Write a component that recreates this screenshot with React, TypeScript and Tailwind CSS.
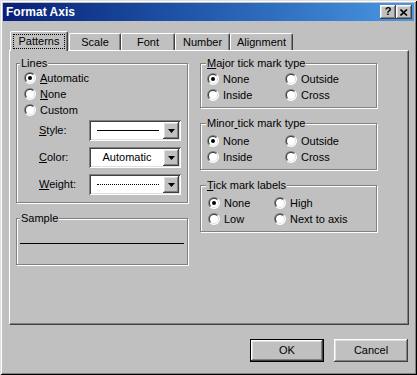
import React from "react";

const raised =
  "shadow-[inset_-1px_-1px_0_#404040,inset_1px_1px_0_#fff,inset_-2px_-2px_0_#808080,inset_2px_2px_0_#dfdfdf]";
const sunken =
  "shadow-[inset_1px_1px_0_#808080,inset_-1px_-1px_0_#fff,inset_2px_2px_0_#404040,inset_-2px_-2px_0_#dfdfdf]";

function Radio({ checked }: { checked?: boolean }) {
  return (
    <svg width="12" height="12" viewBox="0 0 12 12" className="shrink-0">
      <path d="M1.757 10.243A6 6 0 0 1 10.243 1.757Z" fill="#808080" />
      <path d="M10.243 1.757A6 6 0 0 1 1.757 10.243Z" fill="#ffffff" />
      <path d="M2.464 9.536A5 5 0 0 1 9.536 2.464Z" fill="#404040" />
      <path d="M9.536 2.464A5 5 0 0 1 2.464 9.536Z" fill="#dfdfdf" />
      <circle cx="6" cy="6" r="4" fill="#ffffff" />
      {checked && <circle cx="6" cy="6" r="2" fill="#000000" />}
    </svg>
  );
}

function Option({ label, checked }: { label: React.ReactNode; checked?: boolean }) {
  return (
    <div className="flex items-center gap-[4px] h-[16px]">
      <Radio checked={checked} />
      <span>{label}</span>
    </div>
  );
}

function GroupBox({
  label,
  className,
  labelClass,
  children,
}: {
  label: React.ReactNode;
  className: string;
  labelClass: string;
  children?: React.ReactNode;
}) {
  return (
    <div className={`relative border border-[#808080] shadow-[inset_1px_1px_0_#fff,1px_1px_0_#fff] ${className}`}>
      <span className={`absolute -top-[7px] bg-[#c0c0c0] px-[1px] leading-[13px] ${labelClass}`}>{label}</span>
      {children}
    </div>
  );
}

function Combo({ children }: { children: React.ReactNode }) {
  return (
    <div className={`flex w-[92px] h-[21px] bg-white p-[2px] ${sunken}`}>
      <div className="flex-1 flex items-center">{children}</div>
      <div className={`w-[16px] h-[17px] bg-[#c0c0c0] flex items-center justify-center ${raised}`}>
        <svg width="7" height="4" viewBox="0 0 7 4">
          <polygon points="0,0 7,0 3.5,4" fill="#000" />
        </svg>
      </div>
    </div>
  );
}

function TwoCol({
  rows,
  colWidth,
}: {
  rows: { label: React.ReactNode; checked?: boolean }[][];
  colWidth: string;
}) {
  return (
    <>
      {rows.map((row, i) => (
        <div key={i} className="flex">
          <div className={colWidth}>
            <Option label={row[0].label} checked={row[0].checked} />
          </div>
          <Option label={row[1].label} checked={row[1].checked} />
        </div>
      ))}
    </>
  );
}

export default function App() {
  return (
    <div className="w-[417px] h-[375px] bg-[#c0c0c0] p-[3px] text-[11px] text-black font-['Liberation_Sans',Arial,sans-serif] shadow-[inset_1px_1px_0_#dfdfdf,inset_-1px_-1px_0_#000,inset_2px_2px_0_#fff,inset_-2px_-2px_0_#808080]">
      {/* Title bar */}
      <div className="h-[18px] flex items-center justify-between pl-[3px] pr-[2px] bg-gradient-to-r from-[#0a1f78] to-[#4a98e4]">
        <span className="text-white font-bold text-[12px] leading-none">Format Axis</span>
        <div className="flex">
          <div className={`w-[16px] h-[14px] bg-[#c0c0c0] flex items-center justify-center font-bold text-[11px] leading-none pb-[1px] ${raised}`}>
            ?
          </div>
          <div className={`w-[16px] h-[14px] bg-[#c0c0c0] flex items-center justify-center ${raised}`}>
            <svg width="8" height="7" viewBox="0 0 8 7">
              <path d="M0.5 0.5L7 6.5M7 0.5L0.5 6.5" stroke="#000" strokeWidth="1.6" />
            </svg>
          </div>
        </div>
      </div>

      {/* Tabs */}
      <div className="flex items-end h-[19px] mt-[10px] ml-[7px]">
        <div className="relative z-10 -mb-px w-[58px] h-[20px] flex px-[2px] pt-[2px] pb-[2px] bg-[#c0c0c0] border-l border-t border-r border-white border-r-[#404040] rounded-t-[2px] shadow-[inset_-1px_0_0_#808080]">
          <span className="flex-1 flex items-center justify-center border border-dotted border-black">Patterns</span>
        </div>
        {[
          ["Scale", "w-[52px] ml-[1px]"],
          ["Font", "w-[54px]"],
          ["Number", "w-[55px]"],
          ["Alignment", "w-[63px]"],
        ].map(([t, w]) => (
          <div
            key={t}
            className={`${w} h-[17px] flex items-center justify-center border-l border-t border-r border-white border-r-[#404040] rounded-t-[2px] shadow-[inset_-1px_0_0_#808080]`}
          >
            {t}
          </div>
        ))}
      </div>

      {/* Tab panel */}
      <div className="ml-[6px] w-[400px] h-[275px] border border-white border-r-[#404040] border-b-[#404040] shadow-[inset_-1px_-1px_0_#808080] flex gap-[11px] pt-[12px] pl-[6px]">
        <div className="w-[173px] flex flex-col">
          <GroupBox label="Lines" className="w-[172px] h-[140px] pt-[6px] pl-[7px]" labelClass="left-[3px]">
            <Option label={<><u>A</u>utomatic</>} checked />
            <Option label={<><u>N</u>one</>} />
            <Option label="Custom" />
            <div className="flex flex-col gap-[6px] mt-[2px] ml-[15px]">
              <div className="flex items-center">
                <span className="w-[50px]"><u>S</u>tyle:</span>
                <Combo>
                  <div className="ml-[6px] w-[62px] h-px bg-black" />
                </Combo>
              </div>
              <div className="flex items-center">
                <span className="w-[50px]"><u>C</u>olor:</span>
                <Combo>
                  <span className="flex-1 text-center">Automatic</span>
                </Combo>
              </div>
              <div className="flex items-center">
                <span className="w-[50px]"><u>W</u>eight:</span>
                <Combo>
                  <div className="ml-[6px] w-[62px] border-t border-dotted border-black" />
                </Combo>
              </div>
            </div>
          </GroupBox>
          <GroupBox label="Sample" className="w-[172px] h-[47px] mt-[15px]" labelClass="left-[3px]">
            <div className="ml-[3px] mt-[24px] w-[164px] h-px bg-black" />
          </GroupBox>
        </div>

        <div className="w-[178px] flex flex-col">
          <GroupBox
            label={<><u>M</u>ajor tick mark type</>}
            className="w-[177px] h-[45px] pt-[7px] pl-[6px]"
            labelClass="left-[5px]"
          >
            <TwoCol
              colWidth="w-[78px]"
              rows={[
                [{ label: "None", checked: true }, { label: "Outside" }],
                [{ label: "Inside" }, { label: "Cross" }],
              ]}
            />
          </GroupBox>
          <GroupBox
            label={<>Minor<u> </u>tick mark type</>}
            className="w-[177px] h-[47px] mt-[15px] pt-[9px] pl-[6px]"
            labelClass="left-[5px]"
          >
            <TwoCol
              colWidth="w-[78px]"
              rows={[
                [{ label: "None", checked: true }, { label: "Outside" }],
                [{ label: "Inside" }, { label: "Cross" }],
              ]}
            />
          </GroupBox>
          <GroupBox
            label={<><u>T</u>ick mark labels</>}
            className="w-[177px] h-[47px] mt-[15px] pt-[9px] pl-[7px]"
            labelClass="left-[5px]"
          >
            <TwoCol
              colWidth="w-[66px]"
              rows={[
                [{ label: "None", checked: true }, { label: "High" }],
                [{ label: "Low" }, { label: "Next to axis" }],
              ]}
            />
          </GroupBox>
        </div>
      </div>

      {/* Buttons */}
      <div className="flex justify-end gap-[10px] mt-[14px] pr-[6px]">
        <div className="w-[74px] h-[23px] border border-black">
          <div className={`w-full h-full flex items-center justify-center ${raised}`}>OK</div>
        </div>
        <div className={`w-[74px] h-[23px] flex items-center justify-center ${raised}`}>Cancel</div>
      </div>
    </div>
  );
}
